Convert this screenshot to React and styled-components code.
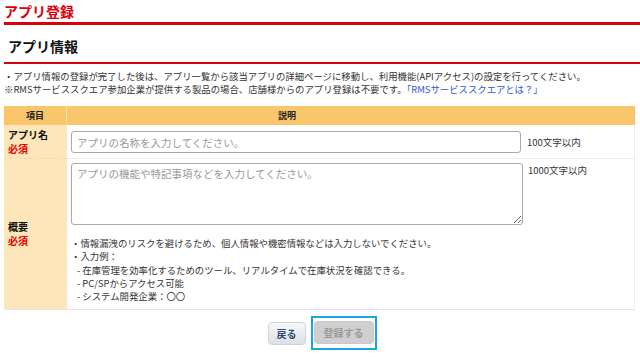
import React from 'react';
import styled, { createGlobalStyle } from 'styled-components';

const GlobalStyle = createGlobalStyle`
  body {
    margin: 0;
    background: #fff;
    font-family: "Noto Sans CJK JP", "Noto Sans", sans-serif;
    color: #222;
  }
`

const Page = styled.div`
  padding-left: 4px;
  width: 636px;
`
const PageTitle = styled.h1`
  margin: 0;
  font-size: 14px;
  line-height: 22px;
  font-weight: bold;
  color: #d9000d;
  border-bottom: 3px solid #d9000d;
`
const SectionTitle = styled.h2`
  margin: 8px 0 0;
  padding: 0 4px 3px;
  font-size: 14px;
  line-height: 26px;
  font-weight: bold;
  color: #111;
  border-bottom: 2px solid #d9000d;
`
const Notes = styled.div`
  margin-top: 6px;
  font-size: 9.4px;
  line-height: 13px;
  color: #333;
`
const Link = styled.a`
  color: #2f55d4;
  text-decoration: none;
`
const Table = styled.div`
  margin-top: 10px;
  width: 630px;
  display: grid;
  grid-template-columns: 63px 1fr 108px;
  border-right: 1px dotted #ddd;
  border-bottom: 1px solid #e4e4e4;
`
const HeadCell = styled.div`
  background: #f9c66c;
  height: 19px;
  font-size: 9px;
  font-weight: bold;
  display: flex;
  align-items: center;
  justify-content: center;
  padding-right: ${p => p.$shift || 0}px;
  border-right: ${p => (p.$first ? '1px solid #fbe0b0' : 'none')};
`
const LabelCell = styled.div`
  background: #fde6ba;
  padding: 0 4px;
  display: flex;
  flex-direction: column;
  justify-content: center;
  font-size: 10px;
  font-weight: bold;
  border-top: ${p => (p.$divided ? '1px dashed #f4d9a8' : 'none')};
`
const LabelText = styled.span`
  display: block;
  line-height: 14px;
  color: ${p => (p.$required ? '#e60000' : '#111')};
`
const FieldCell = styled.div`
  padding: ${p => p.$pad || '5px 4px'};
  border-top: ${p => (p.$divided ? '1px solid #eee' : 'none')};
`
const LimitCell = styled.div`
  font-size: 9.5px;
  color: #333;
  padding: ${p => p.$pad || '0'};
  display: flex;
  align-items: ${p => (p.$top ? 'flex-start' : 'center')};
  border-top: ${p => (p.$divided ? '1px solid #eee' : 'none')};
`
const TextInput = styled.input`
  box-sizing: border-box;
  display: block;
  width: 450px;
  height: 22px;
  border: 1px solid #aaa;
  border-radius: 3px;
  padding: 0 5px;
  font-family: inherit;
  font-size: 10.5px;
  &::placeholder { color: #999; }
`
const TextArea = styled.textarea`
  box-sizing: border-box;
  display: block;
  width: 452px;
  height: 62px;
  border: 1px solid #aaa;
  border-radius: 3px;
  padding: 2px 5px;
  font-family: inherit;
  font-size: 10.5px;
  resize: both;
  &::placeholder { color: #999; }
`
const HintList = styled.ul`
  list-style: none;
  margin: 12px 0 0;
  padding: 0;
  font-size: 9.4px;
  line-height: 13.3px;
  color: #333;
`
const HintItem = styled.li`
  padding-left: ${p => (p.$sub ? 6 : 0)}px;
`
const Actions = styled.div`
  display: flex;
  justify-content: center;
  align-items: center;
  gap: 5px;
  margin-top: 6px;
`
const Button = styled.button`
  height: 23px;
  padding: 0 ${p => p.$px || 8}px;
  border-radius: 4px;
  font-family: inherit;
  font-size: 10px;
  font-weight: bold;
  cursor: pointer;
  border: 1px solid ${p => (p.$disabled ? '#c8c8c8' : '#cfd3d8')};
  color: ${p => (p.$disabled ? '#9a9a9a' : '#2c4b78')};
  background: ${p =>
    p.$disabled ? '#cfcfcf' : 'linear-gradient(#f7f8fa, #dde0e4)'};
`
const FocusRing = styled.span`
  display: inline-flex;
  padding: 3px 1px 4px;
  border: 2px solid #1ca3e4;
`

export default function App() {
  return (
    <Page>
      <GlobalStyle />
      <PageTitle>アプリ登録</PageTitle>
      <SectionTitle>アプリ情報</SectionTitle>
      <Notes>
        ・アプリ情報の登録が完了した後は、アプリ一覧から該当アプリの詳細ページに移動し、利用機能(APIアクセス)の設定を行ってください。
        <br />
        ※RMSサービススクエア参加企業が提供する製品の場合、店舗様からのアプリ登録は不要です。
        <Link href="#">「RMSサービススクエアとは？」</Link>
      </Notes>
      <Table>
        <HeadCell $first>項目</HeadCell>
        <HeadCell $shift={20}>説明</HeadCell>
        <HeadCell />

        <LabelCell>
          <LabelText>アプリ名</LabelText>
          <LabelText $required>必須</LabelText>
        </LabelCell>
        <FieldCell $pad="6px 4px 5px">
          <TextInput placeholder="アプリの名称を入力してください。" />
        </FieldCell>
        <LimitCell>100文字以内</LimitCell>

        <LabelCell $divided>
          <LabelText>概要</LabelText>
          <LabelText $required>必須</LabelText>
        </LabelCell>
        <FieldCell $divided $pad="4px 4px 6px">
          <TextArea placeholder="アプリの機能や特記事項などを入力してください。" />
          <HintList>
            <HintItem>・情報漏洩のリスクを避けるため、個人情報や機密情報などは入力しないでください。</HintItem>
            <HintItem>・入力例：</HintItem>
            <HintItem $sub>- 在庫管理を効率化するためのツール、リアルタイムで在庫状況を確認できる。</HintItem>
            <HintItem $sub>- PC/SPからアクセス可能</HintItem>
            <HintItem $sub>- システム開発企業：〇〇</HintItem>
          </HintList>
        </FieldCell>
        <LimitCell $divided $top $pad="4px 0 0 1px">1000文字以内</LimitCell>
      </Table>
      <Actions>
        <Button $px={8}>戻る</Button>
        <FocusRing>
          <Button $disabled $px={9}>登録する</Button>
        </FocusRing>
      </Actions>
    </Page>
  );
}
